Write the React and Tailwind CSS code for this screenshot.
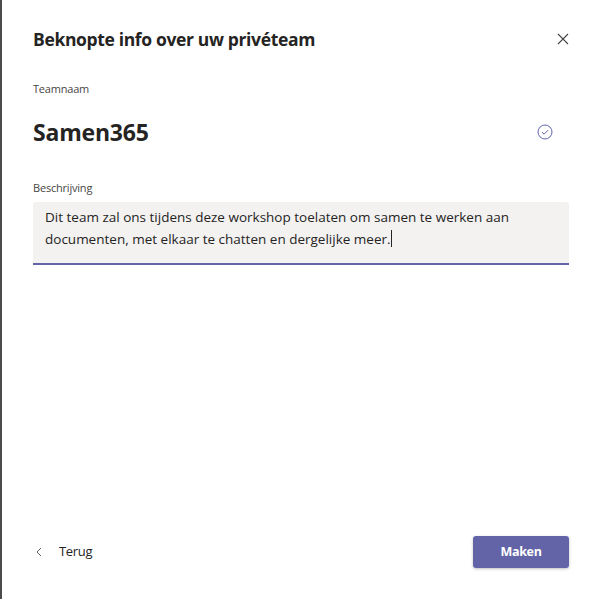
const App = () => {
  return (
    <div
      className="w-[599px] h-[599px] bg-white border-l-2 border-[#4b4b4b] flex flex-col text-[#252423]"
      style={{ fontFamily: '"Open Sans", "Noto Sans", sans-serif' }}
    >
      <div className="flex items-center justify-between pl-[31px] pr-[30px] pt-[27px]">
        <h1 className="text-[17.5px] font-bold leading-[24px] tracking-[-0.35px]">Beknopte info over uw privéteam</h1>
        <svg width="12" height="12" viewBox="0 0 12 12" className="text-[#484644]">
          <path d="M1 1L11 11M11 1L1 11" stroke="currentColor" strokeWidth="1.1" fill="none" />
        </svg>
      </div>

      <div className="pl-[31px] pr-[30px] mt-[30px]">
        <div className="text-[11px] leading-[16px] text-[#484644] tracking-[-0.2px]">Teamnaam</div>
        <div className="flex items-center justify-between mt-[19px] h-[32px]">
          <span className="text-[23px] font-bold leading-[32px] tracking-[-0.2px]">Samen365</span>
          <svg width="16" height="16" viewBox="0 0 16 16" className="mr-[16px] text-[#6264a7]">
            <circle cx="8" cy="8" r="7" stroke="currentColor" strokeWidth="1" fill="none" />
            <path d="M5 8.2L7.1 10.2L11 6.2" stroke="currentColor" strokeWidth="1" fill="none" />
          </svg>
        </div>

        <div className="text-[11px] leading-[16px] text-[#484644] mt-[32px] tracking-[-0.2px]">Beschrijving</div>
        <div className="mt-[6px] bg-[#f3f2f1] border-b-2 border-[#6264a7] rounded-t-[3px] px-[12px] pt-[4px] pb-[13px] text-[13.5px] leading-[22px] text-[#252423]">
          Dit team zal ons tijdens deze workshop toelaten om samen te werken aan documenten, met elkaar te chatten en dergelijke meer.
          <span className="inline-block w-px h-[17px] bg-[#252423] align-[-3px]"></span>
        </div>
      </div>

      <div className="flex-1" />

      <div className="flex items-center justify-between pl-[33px] pr-[30px] pb-[31px]">
        <button className="flex items-center gap-[16px] text-[13px] text-[#252423] tracking-[-0.3px]">
          <svg width="8" height="10" viewBox="0 0 8 10" className="text-[#605e5c]">
            <path d="M6 1L2 5L6 9" stroke="currentColor" strokeWidth="1" fill="none" />
          </svg>
          Terug
        </button>
        <button className="w-[96px] h-[32px] bg-[#6264a7] rounded-[3px] text-white text-[12.5px] font-bold tracking-[-0.3px] shadow-[0_1px_3px_rgba(0,0,0,0.25)]">
          Maken
        </button>
      </div>
    </div>
  );
};

export default App;
